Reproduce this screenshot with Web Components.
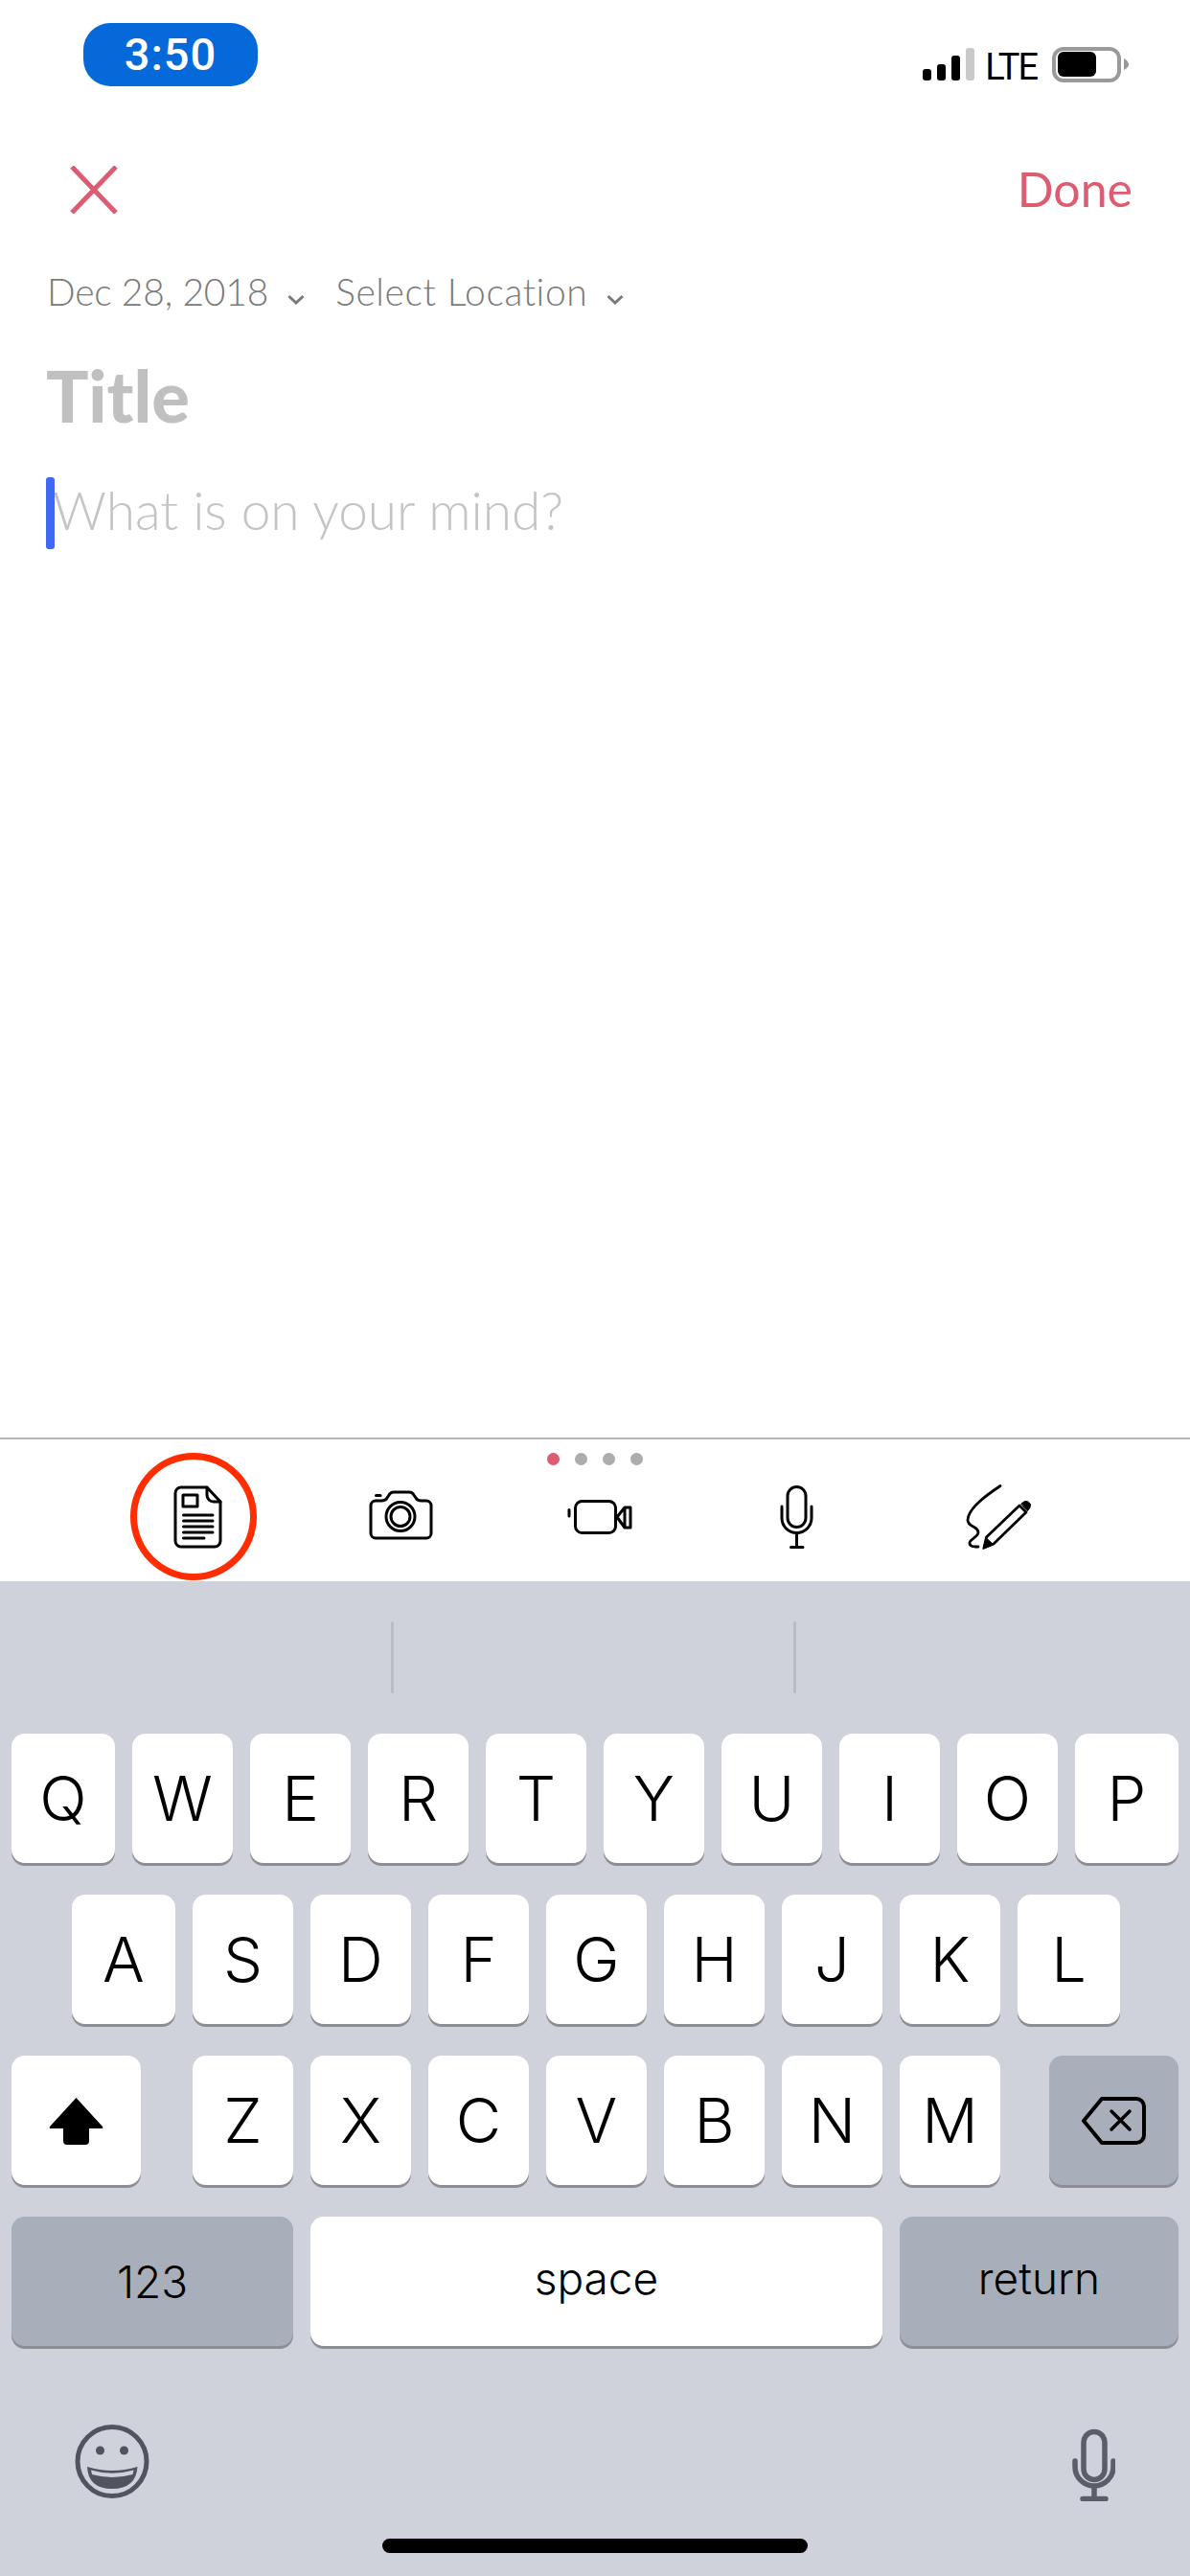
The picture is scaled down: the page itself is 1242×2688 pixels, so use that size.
<!DOCTYPE html>
<html lang="en">
<head>
<meta charset="utf-8">
<title>New note</title>
<style>
    html,body{margin:0;padding:0;background:#fff;}
    body{width:1242px;height:2688px;overflow:hidden;display:flex;flex-direction:column;font-family:"Lato","Open Sans",sans-serif;}
</style>
</head>
<body>
<phone-status time="3:50"></phone-status>
<note-header>Done</note-header>
<note-meta>
    <meta-pick style="--ls:-0.2px">Dec 28, 2018</meta-pick>
    <meta-pick style="--ls:0.6px">Select Location</meta-pick>
</note-meta>
<note-editor title-hint="Title" hint="What is on your mind?"></note-editor>
<attach-bar></attach-bar>
<ios-keyboard></ios-keyboard>

<script>
const phone_status = document.createElement('template');
phone_status.innerHTML = `
    <style>
        :host{display:flex;justify-content:space-between;align-items:flex-start;height:100px;padding:0 64px 0 87px;box-sizing:border-box;flex:none;}
        .pill{margin-top:24px;width:182px;height:66px;border-radius:28px;background:#0569d9;color:#fff;display:flex;align-items:center;justify-content:center;font:500 47px/66px Roboto,sans-serif;letter-spacing:1px;}
        .right{margin-top:49px;display:flex;align-items:flex-end;height:37px;}
        .bars{display:flex;align-items:flex-end;gap:6px;height:34px;margin-bottom:2px;}
        .bars i{display:block;width:9px;border-radius:3px;background:#000;}
        .lte{height:37px;font:400 38px/42px Roboto,sans-serif;color:#000;margin:0 16px 0 11px;letter-spacing:-2px;}
    </style>
    <div class="pill"></div>
    <div class="right">
        <div class="bars">
            <i style="height:12px"></i><i style="height:17px"></i><i style="height:26px"></i><i style="height:34px;background:#c9c9c9"></i>
        </div>
        <div class="lte">LTE</div>
        <svg width="80" height="37" viewBox="0 0 80 37">
            <rect x="2" y="2" width="68" height="33" rx="10" fill="none" stroke="#9a9a9a" stroke-width="4"/>
            <rect x="6" y="5" width="40" height="26" rx="6" fill="#000"/>
            <path d="M75 12 C79 14 80 17 80 18.500 C80 20 79 22 75 24 Z" fill="#9a9a9a"/>
        </svg>
    </div>
`;
class PhoneStatus extends HTMLElement {
    constructor() {
        super();
        this.attachShadow({ mode: 'open' });
        this.shadowRoot.appendChild(phone_status.content.cloneNode(true));
        this.shadowRoot.querySelector('.pill').textContent = this.getAttribute('time');
    }
}
customElements.define('phone-status', PhoneStatus);

const note_header = document.createElement('template');
note_header.innerHTML = `
    <style>
        :host{display:flex;justify-content:space-between;align-items:center;height:76px;margin-top:60px;padding:0 60px 0 73px;flex:none;}
        svg{display:block;}
        .done{font:400 50px/72px Lato,sans-serif;color:#dc5c71;margin-bottom:3px;}
    </style>
    <svg width="50" height="50" viewBox="0 0 50 50"><path d="M2 1 L48 49 M48 1 L2 49" stroke="#dc5c71" stroke-width="5" fill="none"/></svg>
    <div class="done"><slot></slot></div>
`;
class NoteHeader extends HTMLElement {
    constructor() {
        super();
        this.attachShadow({ mode: 'open' });
        this.shadowRoot.appendChild(note_header.content.cloneNode(true));
    }
}
customElements.define('note-header', NoteHeader);

const note_meta = document.createElement('template');
note_meta.innerHTML = `
    <style>
        :host{display:flex;gap:32px;margin-top:43px;padding-left:49px;height:50px;flex:none;}
    </style>
    <slot></slot>
`;
class NoteMeta extends HTMLElement {
    constructor() {
        super();
        this.attachShadow({ mode: 'open' });
        this.shadowRoot.appendChild(note_meta.content.cloneNode(true));
    }
}
customElements.define('note-meta', NoteMeta);

const meta_pick = document.createElement('template');
meta_pick.innerHTML = `
    <style>
        :host{display:flex;align-items:center;gap:20px;font:300 39px/50px Lato,sans-serif;letter-spacing:var(--ls,0);color:#7a7a7a;}
        svg{display:block;margin-top:16px;}
    </style>
    <slot></slot>
    <svg width="18" height="12" viewBox="0 0 18 12"><path d="M1.500 3 L9 10 L16.500 3" fill="none" stroke="#7a7a7a" stroke-width="3"/></svg>
`;
class MetaPick extends HTMLElement {
    constructor() {
        super();
        this.attachShadow({ mode: 'open' });
        this.shadowRoot.appendChild(meta_pick.content.cloneNode(true));
    }
}
customElements.define('meta-pick', MetaPick);

const note_editor = document.createElement('template');
note_editor.innerHTML = `
    <style>
        :host{display:block;flex:1;padding:0 0 0 48px;}
        .title{margin-top:42px;font:900 74px/84px Lato,sans-serif;color:#c0c0c0;}
        .body{margin-top:43px;position:relative;height:75px;font:300 55px/68px Lato,sans-serif;color:#c4c4c4;padding-left:7px;}
        .caret{position:absolute;left:0;top:0;width:9px;height:75px;border-radius:3px;background:#4169f0;}
    </style>
    <div class="title"></div>
    <div class="body"><span class="caret"></span><span class="hint"></span></div>
`;
class NoteEditor extends HTMLElement {
    constructor() {
        super();
        this.attachShadow({ mode: 'open' });
        this.shadowRoot.appendChild(note_editor.content.cloneNode(true));
        this.shadowRoot.querySelector('.title').textContent = this.getAttribute('title-hint');
        this.shadowRoot.querySelector('.hint').textContent = this.getAttribute('hint');
    }
}
customElements.define('note-editor', NoteEditor);

const attach_bar = document.createElement('template');
attach_bar.innerHTML = `
    <style>
        :host{display:block;position:relative;height:150px;box-sizing:border-box;border-top:2px solid #b8b8b8;background:#fff;flex:none;}
        .dots{display:flex;justify-content:center;gap:16px;margin-top:14px;height:13px;}
        .dots i{display:block;width:13px;height:13px;border-radius:50%;background:#adadad;}
        .dots i:first-child{background:#dc5c71;}
        .icons{display:flex;gap:116px;padding-left:169px;margin-top:11px;}
        svg{display:block;flex:none;}
        .ring{position:absolute;left:136px;top:14px;width:132px;height:133px;box-sizing:border-box;border:7px solid #ff2d00;border-radius:50%;}
    </style>
    <div class="dots"><i></i><i></i><i></i><i></i></div>
    <div class="icons">
        <svg width="90" height="90" viewBox="-1 0 90 90" fill="none" stroke="#000" stroke-width="3" stroke-linecap="round" stroke-linejoin="round">
            <path d="M19 12 H46 L60 27 V68 a6 6 0 0 1 -6 6 H19 a6 6 0 0 1 -6 -6 V18 a6 6 0 0 1 6 -6 Z"/>
            <path d="M46 12 V20 a7 7 0 0 0 7 7 H60"/>
            <rect x="21" y="20" width="15" height="12"/>
            <path d="M21.500 41 H52 M21.500 47 H52 M21.500 53 H52 M21.500 59 H52 M21.500 65 H43"/>
        </svg>
        <svg width="90" height="90" viewBox="-1 0 90 90" fill="none" stroke="#000" stroke-width="3" stroke-linecap="round" stroke-linejoin="round">
            <path d="M16 26 h6 c3 0 5 -1 6 -3 l2 -3 c1 -2 2 -3 5 -3 h16 c3 0 4 1 5 3 l2 3 c1 2 3 3 6 3 h5 a5 5 0 0 1 5 5 v29 a5 5 0 0 1 -5 5 H16 a5 5 0 0 1 -5 -5 V31 a5 5 0 0 1 5 -5 Z"/>
            <circle cx="42" cy="42.500" r="15"/>
            <circle cx="42" cy="42.500" r="10"/>
            <path d="M16.500 20.500 H21"/>
        </svg>
        <svg width="90" height="90" viewBox="581 1540 90 90" fill="none" stroke="#000" stroke-width="3" stroke-linecap="round" stroke-linejoin="round">
            <rect x="600.500" y="1566.500" width="42" height="33" rx="7"/>
            <path d="M594 1575.500 V1582"/>
            <path d="M644 1583 L652 1573 H658 V1594 H652 Z M652 1573 V1594"/>
        </svg>
        <svg width="90" height="90" viewBox="787 1540 90 90" fill="none" stroke="#000" stroke-width="3" stroke-linecap="round" stroke-linejoin="round">
            <rect x="822" y="1551.500" width="19" height="42" rx="9.500"/>
            <path d="M816 1572 V1584 a15.500 15.500 0 0 0 31 0 V1572"/>
            <path d="M831.500 1600 V1614 M825.500 1614.500 H838"/>
        </svg>
        <svg width="90" height="90" viewBox="-3 0 90 90" fill="none" stroke="#000" stroke-width="2.800" stroke-linecap="round" stroke-linejoin="round">
            <path d="M48 10.500 C34 20 15 33 14 46 C14 54 25 52 25 59 C25 64 16 66 16 70 C16 74 20 74 25 74"/>
            <path d="M33.500 64 L68 31 L75 38 L41 71 L31 75 Z"/>
            <path d="M30 76 L33.500 65 L40.500 71.500 Z" fill="#000" stroke-width="1"/>
            <path d="M70 29 L73.500 26.500 Q78 26 79.500 30 Q80 33 76.500 36.500 Z" fill="#000" stroke-width="1"/>
        </svg>
    </div>
    <div class="ring"></div>
`;
class AttachBar extends HTMLElement {
    constructor() {
        super();
        this.attachShadow({ mode: 'open' });
        this.shadowRoot.appendChild(attach_bar.content.cloneNode(true));
    }
}
customElements.define('attach-bar', AttachBar);

const kb_key = document.createElement('template');
kb_key.innerHTML = `
    <style>
        :host{display:flex;align-items:center;justify-content:center;flex:none;width:var(--w,105px);height:135px;box-sizing:border-box;border-radius:14px;background:#fff;color:#000;box-shadow:0 3px 0 #8d8e93;font:350 65px/135px Inter,sans-serif;}
        :host([dark]){background:#a9afba;}
        :host([small]){font-size:46px;line-height:60px;}
        :host([lower]){padding-bottom:7px;}
    </style>
    <slot></slot>
`;
class KbKey extends HTMLElement {
    constructor() {
        super();
        this.attachShadow({ mode: 'open' });
        this.shadowRoot.appendChild(kb_key.content.cloneNode(true));
    }
}
customElements.define('kb-key', KbKey);

const ios_keyboard = document.createElement('template');
ios_keyboard.innerHTML = `
    <style>
        :host{display:block;flex:none;height:1038px;background:#cfd2da;overflow:hidden;}
        .suggest{display:flex;height:159px;padding:42px 0 0 408px;box-sizing:border-box;gap:417px;}
        .suggest i{display:block;width:3px;height:75px;border-radius:1.500px;background:#b9bcc2;}
        .row{display:flex;gap:18px;margin-bottom:33px;}
        .r1{padding-left:12px;}
        .r2{padding-left:75px;}
        .r3{padding-left:12px;}
        .r3 .shift{margin-right:36px;}
        .r3 .back{margin-left:33px;}
        .r4{padding-left:12px;}
        .tools{display:flex;justify-content:space-between;padding:0 78px;margin-top:82px;height:80px;}
        .home{margin:39px auto 0;width:444px;height:15px;border-radius:8px;background:#000;}
        svg{display:block;}
    </style>
    <div class="suggest"><i></i><i></i></div>
    <div class="row r1">
        <kb-key style="--w:108px">Q</kb-key><kb-key>W</kb-key><kb-key>E</kb-key><kb-key>R</kb-key><kb-key>T</kb-key><kb-key>Y</kb-key><kb-key>U</kb-key><kb-key>I</kb-key><kb-key>O</kb-key><kb-key style="--w:108px">P</kb-key>
    </div>
    <div class="row r2">
        <kb-key style="--w:108px">A</kb-key><kb-key>S</kb-key><kb-key>D</kb-key><kb-key>F</kb-key><kb-key>G</kb-key><kb-key>H</kb-key><kb-key>J</kb-key><kb-key>K</kb-key><kb-key style="--w:107px">L</kb-key>
    </div>
    <div class="row r3">
        <kb-key class="shift" style="--w:135px">
            <svg width="57" height="50" viewBox="0 0 57 50"><path d="M28.500 1 L56 31 Q57 33 55 33 H42 V46 Q42 50 38 50 H19 Q15 50 15 46 V33 H2 Q0 33 1 31 Z" fill="#000"/></svg>
        </kb-key>
        <kb-key>Z</kb-key><kb-key>X</kb-key><kb-key>C</kb-key><kb-key>V</kb-key><kb-key>B</kb-key><kb-key>N</kb-key><kb-key>M</kb-key>
        <kb-key class="back" dark style="--w:135px">
            <svg width="67" height="50" viewBox="0 0 67 50" fill="none" stroke="#000" stroke-width="4" stroke-linejoin="round" stroke-linecap="round"><path d="M21 2 H57 a8 8 0 0 1 8 8 V40 a8 8 0 0 1 -8 8 H21 L2 25 Z"/><path d="M31 15 L50 34 M50 15 L31 34" stroke-width="3.500"/></svg>
        </kb-key>
    </div>
    <div class="row r4">
        <kb-key dark small style="--w:294px">123</kb-key><kb-key small lower style="--w:597px">space</kb-key><kb-key dark small lower style="--w:291px">return</kb-key>
    </div>
    <div class="tools">
        <svg width="78" height="80" viewBox="78 2530 78 80">
            <circle cx="117" cy="2568.500" r="36" fill="none" stroke="#50545e" stroke-width="5"/>
            <circle cx="104.500" cy="2557" r="4.500" fill="#50545e"/><circle cx="129.500" cy="2557" r="4.500" fill="#50545e"/>
            <path d="M91 2574 Q117 2582 143.500 2574 Q142 2597 117 2597 Q92 2597 91 2574 Z" fill="#50545e"/>
            <path d="M95 2577.500 Q117 2584 139.500 2577.500 L138.500 2582 Q117 2588 96 2582 Z" fill="#cfd2da"/>
        </svg>
        <svg width="45" height="80" viewBox="1119 2530 45 80" fill="none" stroke="#5a5e68" stroke-width="5.500" stroke-linecap="round" stroke-linejoin="round">
            <rect x="1131" y="2537.500" width="22" height="50" rx="11"/>
            <path d="M1122 2568 V2574 a20 20 0 0 0 40 0 V2568"/>
            <path d="M1142 2595 V2607 M1130 2607.500 H1154"/>
        </svg>
    </div>
    <div class="home"></div>
`;
class IosKeyboard extends HTMLElement {
    constructor() {
        super();
        this.attachShadow({ mode: 'open' });
        this.shadowRoot.appendChild(ios_keyboard.content.cloneNode(true));
    }
}
customElements.define('ios-keyboard', IosKeyboard);
</script>
</body>
</html>
